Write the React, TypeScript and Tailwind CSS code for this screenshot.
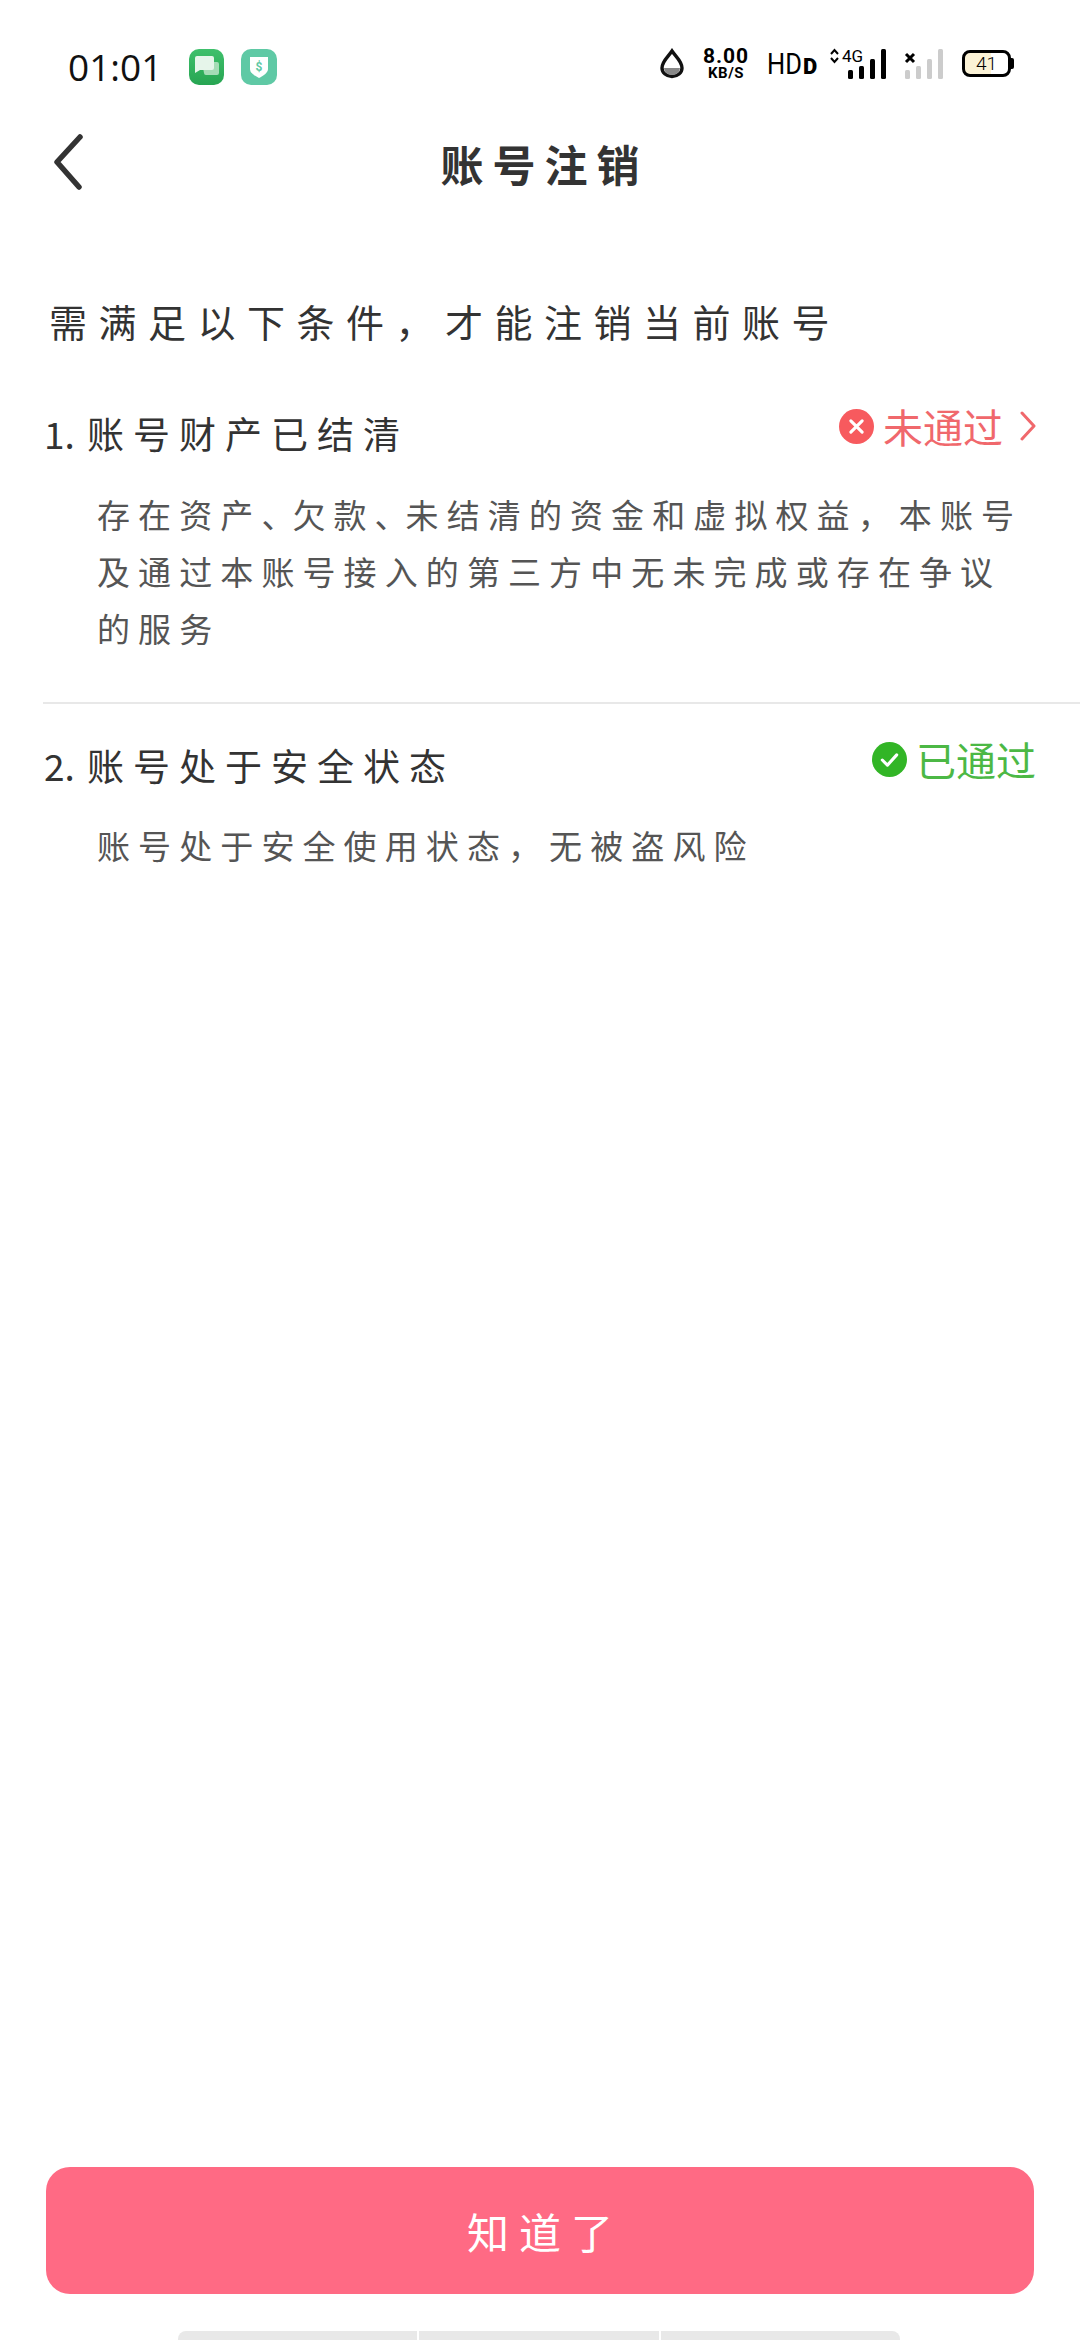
function StatusIcons() {
  return (
    <div className="flex items-center text-black">
      {/* water drop */}
      <svg width="26" height="31" viewBox="0 0 26 31" className="mr-[16px]">
        <path d="M13 3 C9 9 3 13 3 20 a10 8.5 0 0 0 20 0 C23 13 17 9 13 3 Z" fill="#fff" stroke="#111" strokeWidth="3.4" />
        <path d="M5 20 h16 a8 7 0 0 1 -16 0 Z" fill="#888" />
      </svg>
      <div className="mr-[16px] flex w-[50px] flex-col items-center font-['Roboto',sans-serif] font-bold">
        <span className="text-[21px] leading-[20px] tracking-[1px]">8.00</span>
        <span className="text-[15px] leading-[15px] tracking-[0.5px]">KB/S</span>
      </div>
      <div className="mr-[15px] flex w-[48px] items-end font-['Roboto',sans-serif]">
        <span className="w-[36px] origin-left scale-x-[0.85] text-[30px] leading-[28px] whitespace-nowrap">HD</span>
        <span className="mb-[1px] text-[22px] leading-[20px] font-black">D</span>
      </div>
      <div className="relative mr-[18px] h-[34px] w-[56px]">
        <span className="absolute top-[1px] left-[12px] font-['Roboto',sans-serif] text-[17px] leading-[17px]">4G</span>
        <svg width="56" height="34" viewBox="0 0 56 34" className="absolute top-0 left-0">
          <path d="M1 7 L4.5 3 L8 7 M1 11 L4.5 15 L8 11" fill="none" stroke="#000" strokeWidth="2" />
          <rect x="18" y="23" width="5" height="9" rx="1.5" />
          <rect x="29" y="19" width="5" height="13" rx="1.5" />
          <rect x="40" y="12" width="5" height="20" rx="1.5" />
          <rect x="51" y="2" width="5" height="30" rx="1.5" />
        </svg>
      </div>
      <svg width="40" height="34" viewBox="0 0 40 34" className="mr-[18px]">
        <path d="M2 7 L10 15 M10 7 L2 15" stroke="#000" strokeWidth="3" />
        <rect x="1" y="23" width="5" height="9" rx="1.5" fill="#ccc" />
        <rect x="12" y="19" width="5" height="13" rx="1.5" fill="#ccc" />
        <rect x="23" y="12" width="5" height="20" rx="1.5" fill="#ccc" />
        <rect x="34" y="2" width="5" height="30" rx="1.5" fill="#ccc" />
      </svg>
      <div className="relative h-[27px] w-[49px] rounded-[8px] border-[3px] border-black bg-[linear-gradient(90deg,#fbf2d6_60%,#fff_60%)]">
        <span className="absolute inset-0 flex items-center justify-center font-['Roboto',sans-serif] text-[19px] leading-none font-light">41</span>
        <div className="absolute top-[5px] -right-[6px] h-[11px] w-[3px] rounded-r-[2px] bg-black"></div>
      </div>
    </div>
  );
}

export default function App() {
  return (
    <div className="flex h-[2340px] w-[1080px] flex-col overflow-hidden bg-white font-['Noto_Sans_CJK_SC','Noto_Sans',sans-serif]">
      <div className="flex h-[104px] shrink-0 items-start justify-between pt-[46px] pr-[69px] pl-[68px]">
        <div className="flex h-[40px] items-center">
          <span className="w-[121px] font-['Open_Sans',sans-serif] text-[37px] leading-none text-[#111]">01:01</span>
          <div className="mt-[2px] flex h-[36px] w-[35px] items-center justify-center rounded-[10px] bg-[linear-gradient(180deg,#3fc06c,#27a552)]">
            <svg width="26" height="24" viewBox="0 0 26 24">
              <path d="M8 7 h15 a2 2 0 0 1 2 2 v9 a2 2 0 0 1 -2 2 h-11 a2 2 0 0 1 -2 -2 Z" fill="#a5dcb6" />
              <path d="M3 1 h15 a2 2 0 0 1 2 2 v10 a2 2 0 0 1 -2 2 H6 l-5 3 V3 a2 2 0 0 1 2 -2 Z" fill="#e6f5ea" />
            </svg>
          </div>
          <div className="mt-[2px] ml-[17px] flex h-[36px] w-[36px] items-center justify-center rounded-[10px] bg-[#5fc9a5]">
            <svg width="20" height="24" viewBox="0 0 20 24">
              <path d="M1 2 h18 v12 c0 4 -5 7 -9 9 c-4 -2 -9 -5 -9 -9 Z" fill="#fff" />
              <text x="10" y="15.5" textAnchor="middle" fontSize="12" fontWeight="700" fill="#5fc9a5" fontFamily="Roboto, sans-serif">$</text>
            </svg>
          </div>
        </div>
        <div className="h-[40px]">
          <StatusIcons />
        </div>
      </div>

      <div className="relative flex h-[118px] shrink-0 items-center justify-center">
        <button className="absolute top-[30px] left-[53px]">
          <svg width="32" height="56" viewBox="0 0 32 56" fill="none" stroke="#333" strokeWidth="5.5" strokeLinecap="round" strokeLinejoin="round">
            <path d="M27 3 L4 28 L26 53" />
          </svg>
        </button>
        <h1 className="pl-[9px] text-[43px] leading-[56px] font-bold tracking-[9px] text-[#333]">账号注销</h1>
      </div>

      <div className="flex-1">
        <h2 className="mt-[71px] pl-[49px] text-[38px] leading-[56px] tracking-[11.5px] whitespace-nowrap text-[#333]">
          需满足以下条件，才能注销当前账号
        </h2>

        <div className="mt-[52px] flex items-center justify-between pr-[44px] pl-[44px]">
          <div className="flex text-[37px] leading-[56px] tracking-[9px] text-[#333]">
            <span className="w-[43px] tracking-normal">1.</span>
            <span>账号财产已结清</span>
          </div>
          <div className="mb-[14px] flex items-center text-[40px] leading-[50px] text-[#f0686c]">
            <svg width="35" height="35" viewBox="0 0 34 34" className="mr-[9px]">
              <circle cx="17" cy="17" r="17" fill="#f75a5e" />
              <path d="M11.5 11.5 L22.5 22.5 M22.5 11.5 L11.5 22.5" stroke="#fff" strokeWidth="3" strokeLinecap="round" />
            </svg>
            <span>未通过</span>
            <svg width="16" height="30" viewBox="0 0 16 30" fill="none" stroke="#f0686c" strokeWidth="3" strokeLinecap="round" strokeLinejoin="round" className="ml-[17px]">
              <path d="M2 2 L14 15 L2 28" />
            </svg>
          </div>
        </div>
        <p className="mt-[21px] pl-[97px] text-[33px] leading-[57px] tracking-[8.1px] whitespace-nowrap text-[#555]">
          存在资产<span className="tracking-[-2px]">、</span>欠款<span className="tracking-[-2px]">、</span>未结清的资金和虚拟权益，本账号
          <br />
          及通过本账号接入的第三方中无未完成或存在争议
          <br />
          的服务
        </p>

        <div className="mt-[45px] ml-[43px] h-[2px] bg-[#e8e8e8]"></div>

        <div className="mt-[30px] flex items-center justify-between pr-[44px] pl-[44px]">
          <div className="flex text-[37px] leading-[56px] tracking-[9px] text-[#333]">
            <span className="w-[43px] tracking-normal">2.</span>
            <span>账号处于安全状态</span>
          </div>
          <div className="mb-[12px] flex items-center text-[40px] leading-[50px] text-[#4cb845]">
            <svg width="35" height="35" viewBox="0 0 34 34" className="mr-[9px]">
              <circle cx="17" cy="17" r="17" fill="#32b526" />
              <path d="M10 17.5 L15 22.5 L24 12.5" fill="none" stroke="#fff" strokeWidth="3" strokeLinecap="round" strokeLinejoin="round" />
            </svg>
            <span>已通过</span>
          </div>
        </div>
        <p className="mt-[21px] pl-[97px] text-[33px] leading-[57px] tracking-[8.1px] whitespace-nowrap text-[#555]">
          账号处于安全使用状态，无被盗风险
        </p>
      </div>

      <button className="mx-[46px] flex h-[127px] shrink-0 items-center justify-center rounded-[24px] bg-[#ff6a84] pl-[10px] text-[42px] tracking-[10px] text-white">
        知道了
      </button>

      <div className="mt-[37px] ml-[178px] flex h-[9px] w-[722px] shrink-0 gap-[2px] overflow-hidden rounded-t-[8px]">
        <div className="flex-1 bg-[#e8e8e8]"></div>
        <div className="flex-1 bg-[#e8e8e8]"></div>
        <div className="flex-1 bg-[#e8e8e8]"></div>
      </div>
    </div>
  );
}
